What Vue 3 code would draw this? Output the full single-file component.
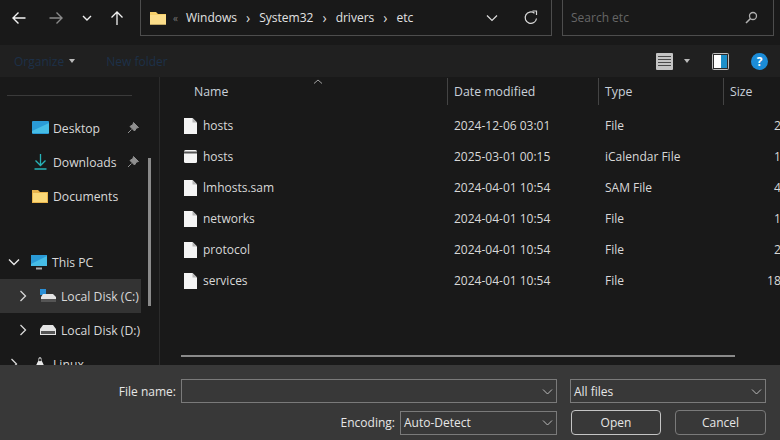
<script setup>
const quick = [
  { name: 'Desktop', icon: 'desktop', pin: true },
  { name: 'Downloads', icon: 'download', pin: true },
  { name: 'Documents', icon: 'folder', pin: false },
];

const files = [
  { name: 'hosts', date: '2024-12-06 03:01', type: 'File', size: '2 KB', icon: 'doc' },
  { name: 'hosts', date: '2025-03-01 00:15', type: 'iCalendar File', size: '1 KB', icon: 'cal' },
  { name: 'lmhosts.sam', date: '2024-04-01 10:54', type: 'SAM File', size: '4 KB', icon: 'doc' },
  { name: 'networks', date: '2024-04-01 10:54', type: 'File', size: '1 KB', icon: 'doc' },
  { name: 'protocol', date: '2024-04-01 10:54', type: 'File', size: '2 KB', icon: 'doc' },
  { name: 'services', date: '2024-04-01 10:54', type: 'File', size: '18 KB', icon: 'doc' },
];
</script>

<template>
  <div class="dialog">
    <!-- Top navigation -->
    <header class="nav">
      <div class="nav-buttons">
        <svg class="nav-arrow" width="16" height="16" viewBox="0 0 16 16"><path d="M14.5 8H2M7.5 2.5 2 8l5.5 5.5" fill="none" stroke="#f2f2f2" stroke-width="1.4"/></svg>
        <svg class="nav-arrow fwd" width="16" height="16" viewBox="0 0 16 16"><path d="M1.5 8H14M8.5 2.5 14 8l-5.500 5.500" fill="none" stroke="#8a8a8a" stroke-width="1.4"/></svg>
        <svg class="nav-chev" width="12" height="12" viewBox="0 0 12 12"><path d="M2 4l4 4 4-4" fill="none" stroke="#eee" stroke-width="1.4"/></svg>
        <svg class="nav-up" width="16" height="16" viewBox="0 0 16 16"><path d="M8 15V2M2.500 7.500 8 2l5.500 5.500" fill="none" stroke="#f2f2f2" stroke-width="1.300"/></svg>
      </div>
      <div class="address">
        <svg width="16" height="14" viewBox="0 0 16 14"><path d="M0 1h6l2 2h8v10.500H0z" fill="#f6cf6a"/><path d="M0 4h16v9.500H0z" fill="#fbdd8a"/></svg>
        <span class="crumb-more">«</span>
        <span class="crumb">Windows</span><span class="sep">›</span>
        <span class="crumb">System32</span><span class="sep">›</span>
        <span class="crumb">drivers</span><span class="sep">›</span>
        <span class="crumb">etc</span>
        <svg class="addr-chev" width="12" height="12" viewBox="0 0 12 12"><path d="M1 3.500 6 8.500l5-5" fill="none" stroke="#ddd" stroke-width="1.200"/></svg>
        <svg class="refresh" width="16" height="16" viewBox="0 0 16 16"><path d="M13.500 8.500A5.700 5.700 0 1 1 11.500 3.300" fill="none" stroke="#d8d8d8" stroke-width="1.200"/><path d="M9.500 1h4v4" fill="none" stroke="#d8d8d8" stroke-width="1.200"/></svg>
      </div>
      <div class="search">
        <span>Search etc</span>
        <svg width="13" height="13" viewBox="0 0 13 13"><circle cx="8" cy="5" r="3.500" fill="none" stroke="#b0b0b0" stroke-width="1.300"/><path d="M5.500 7.500 1 12" stroke="#b0b0b0" stroke-width="1.600"/></svg>
      </div>
    </header>

    <!-- Command bar -->
    <div class="commands">
      <span class="cmd">Organize</span>
      <span class="caret"></span>
      <span class="cmd new">New folder</span>
      <span class="spacer"></span>
      <svg width="17" height="17" viewBox="0 0 17 17"><rect width="17" height="17" rx="1" fill="#c4c4c4"/><path d="M2 3.500h13M2 6.500h13M2 9.500h13M2 12.500h13" stroke="#4a4a4a" stroke-width="1"/></svg>
      <span class="caret view"></span>
      <svg class="pane" width="17" height="17" viewBox="0 0 17 17"><rect x=".5" y=".5" width="16" height="16" rx="1" fill="#2a2a2a" stroke="#bdbdbd"/><rect x="2" y="2" width="7" height="13" fill="#fff"/><rect x="9" y="2" width="6" height="13" fill="#1c8fc9"/></svg>
      <span class="help">?</span>
    </div>

    <main class="body">
      <!-- Left tree -->
      <aside class="side">
        <div class="side-rule"></div>
        <div v-for="q in quick" :key="q.name" class="side-row">
          <svg v-if="q.icon === 'desktop'" width="17" height="14" viewBox="0 0 17 14"><rect width="17" height="13" rx="1" fill="#2a9ad6"/><path d="M0 10 17 2v10H0z" fill="#46bde6"/></svg>
          <svg v-else-if="q.icon === 'download'" width="17" height="16" viewBox="0 0 17 16"><path d="M8.500 0v11M3.500 6.500l5 5 5-5M2.500 15h12" fill="none" stroke="#27b3b8" stroke-width="1.300"/></svg>
          <svg v-else class="docs" width="16" height="13" viewBox="0 0 16 13"><path d="M0 0h6l2 2h8v11H0z" fill="#e9b44c"/><path d="M1 3h14v9H1z" fill="#fbd978"/></svg>
          <span class="side-label">{{ q.name }}</span>
          <svg v-if="q.pin" class="pin" width="12" height="12" viewBox="0 0 12 12"><path d="M6.500.5 11.500 5.500 9.500 6 7.500 9 3 4.500 6 2.500zM4.500 7.500 1 11" fill="#8f8f8f" stroke="#8f8f8f"/></svg>
        </div>
        <div class="side-gap"></div>
        <div class="side-row pc">
          <svg class="tw" width="12" height="12" viewBox="0 0 12 12"><path d="M1 3.500 6 8.500l5-5" fill="none" stroke="#e8e8e8" stroke-width="1.400"/></svg>
          <svg width="16" height="15" viewBox="0 0 16 15"><rect width="16" height="11" fill="#2a9ad6"/><path d="M0 9 16 1v10H0z" fill="#46bde6"/><path d="M5 13.500h6" stroke="#aaa" stroke-width="2"/></svg>
          <span class="side-label">This PC</span>
        </div>
        <div class="side-row disk selected">
          <svg class="tw" width="12" height="12" viewBox="0 0 12 12"><path d="M3.500 1l5 5-5 5" fill="none" stroke="#d8d8d8" stroke-width="1.300"/></svg>
          <svg width="16" height="14" viewBox="0 0 16 14"><rect width="6" height="6" fill="#2a8fd6"/><path d="M1 8 3 5h10l3 3v5H1z" fill="#e4e4e4"/><path d="M1 10h15v3H1z" fill="#555"/></svg>
          <span class="side-label">Local Disk (C:)</span>
        </div>
        <div class="side-row disk">
          <svg class="tw" width="12" height="12" viewBox="0 0 12 12"><path d="M3.500 1l5 5-5 5" fill="none" stroke="#d8d8d8" stroke-width="1.300"/></svg>
          <svg width="16" height="10" viewBox="0 0 16 10"><path d="M0 4 3 0h10l3 4v6H0z" fill="#e4e4e4"/><path d="M1 6h14v3H1z" fill="#555"/></svg>
          <span class="side-label">Local Disk (D:)</span>
        </div>
        <div class="side-row linux">
          <svg class="tw" width="12" height="12" viewBox="0 0 12 12"><path d="M3.500 1l5 5-5 5" fill="none" stroke="#d8d8d8" stroke-width="1.300"/></svg>
          <svg width="10" height="14" viewBox="0 0 12 16"><path d="M6 0C4 0 4 2 4 4 3 6 1 9 1 12c0 2 2 3 5 3s5-1 5-3c0-3-2-6-3-8 0-2 0-4-2-4z" fill="#e8e8e8"/><path d="M4.500 1.500h3v3h-3z" fill="#333"/></svg>
          <span class="side-label">Linux</span>
        </div>
        <div class="side-thumb"></div>
      </aside>

      <!-- File list -->
      <section class="list">
        <div class="row head">
          <span class="cell name-head">Name</span>
          <span class="cell">Date modified</span>
          <span class="cell">Type</span>
          <span class="cell">Size</span>
        </div>
        <svg class="sort" width="10" height="5" viewBox="0 0 10 5"><path d="M1 4.500 5 1l4 3.500" fill="none" stroke="#a0a0a0"/></svg>
        <div v-for="f in files" :key="f.name + f.date" class="row file">
          <span class="file-name">
            <svg v-if="f.icon === 'doc'" width="13" height="16" viewBox="0 0 13 16"><path d="M0 0h8.500L13 4.500V16H0z" fill="#f4f4f4"/><path d="M8.500 0v4.500H13z" fill="#b8b8b8"/></svg>
            <svg v-else width="13" height="13" viewBox="0 0 13 13"><rect width="13" height="13" rx="1.500" fill="#f4f4f4"/><rect y="1.500" width="13" height="2" fill="#555"/></svg>
            <span>{{ f.name }}</span>
          </span>
          <span class="cell">{{ f.date }}</span>
          <span class="cell">{{ f.type }}</span>
          <span class="size">{{ f.size }}</span>
        </div>
        <div class="hscroll"></div>
      </section>
    </main>

    <!-- Bottom form -->
    <footer class="form">
      <label class="lbl">File name:</label>
      <div class="box name-box">
        <svg width="11" height="11" viewBox="0 0 11 11"><path d="M1 3.500 5.500 8 10 3.500" fill="none" stroke="#bbb"/></svg>
      </div>
      <div class="box filter-box">
        <span>All files</span>
        <svg width="11" height="11" viewBox="0 0 11 11"><path d="M1 3.500 5.500 8 10 3.500" fill="none" stroke="#bbb"/></svg>
      </div>
      <label class="lbl enc-lbl">Encoding:</label>
      <div class="box enc-box">
        <span>Auto-Detect</span>
        <svg width="11" height="11" viewBox="0 0 11 11"><path d="M1 3.500 5.500 8 10 3.500" fill="none" stroke="#bbb"/></svg>
      </div>
      <button class="btn primary">Open</button>
      <button class="btn">Cancel</button>
    </footer>
  </div>
</template>

<style>
html, body {
  margin: 0;
  background: #191919;
  overflow: hidden;
}
</style>

<style scoped>
.dialog {
  width: 780px;
  height: 440px;
  overflow: hidden;
  display: flex;
  flex-direction: column;
  background: #191919;
  color: #d8d8d8;
  font-family: "Open Sans", "Noto Sans", sans-serif;
  font-size: 12px;
}

.nav {
  height: 45px;
  flex: none;
  display: flex;
  align-items: flex-start;
  background: #191919;
}
.nav-buttons {
  width: 140px;
  height: 35px;
  display: flex;
  align-items: center;
  padding-left: 11px;
  box-sizing: border-box;
}
.nav-arrow.fwd { margin-left: 21px; }
.nav-chev { margin-left: 17px; }
.nav-up { margin-left: 16px; }

.address {
  width: 412px;
  height: 36px;
  box-sizing: border-box;
  border: 1px solid #4d4d4d;
  border-top: none;
  display: flex;
  align-items: center;
  padding-left: 9px;
  color: #e2e2e2;
}
.crumb-more { margin: 0 8px 0 7px; color: #777; font-size: 10px; }
.sep { margin: 0 9px; color: #ddd; font-size: 14px; line-height: 12px; }
.addr-chev { margin-left: auto; margin-right: 25px; }
.refresh { margin-right: 12px; }

.search {
  margin-left: 10px;
  width: 212px;
  height: 36px;
  box-sizing: border-box;
  border: 1px solid #4d4d4d;
  border-top: none;
  display: flex;
  align-items: center;
  justify-content: space-between;
  padding: 0 15px 0 8px;
  color: #666;
}

.commands {
  height: 32px;
  flex: none;
  background: #202020;
  display: flex;
  align-items: center;
  padding-left: 14px;
  padding-right: 12px;
}
.cmd { color: #1d3048; }
.cmd.new { margin-left: 31px; }
.caret {
  width: 0;
  height: 0;
  margin-left: 5px;
  border-left: 3.500px solid transparent;
  border-right: 3.500px solid transparent;
  border-top: 4px solid #bbb;
}
.caret.view { margin-left: 11px; }
.spacer { flex: 1; }
.pane { margin-left: 22px; }
.help {
  width: 17px;
  height: 17px;
  margin-left: 22px;
  border-radius: 50%;
  background: #1b8cd8;
  color: #fff;
  font-size: 12px;
  font-weight: 700;
  line-height: 17px;
  text-align: center;
}

.body {
  flex: 1;
  min-height: 0;
  display: flex;
  overflow: hidden;
}

.side {
  position: relative;
  width: 160px;
  flex: none;
  box-sizing: border-box;
  border-right: 1px solid #2b2b2b;
  overflow: hidden;
  font-size: 12.2px;
}
.side-rule {
  margin: 18px 27px 0 7px;
  border-top: 1px solid #3a3a3a;
  height: 15px;
}
.side-row {
  height: 34px;
  width: 141px;
  box-sizing: border-box;
  display: flex;
  align-items: center;
  padding-left: 32px;
  white-space: nowrap;
}
.side-label { margin-left: 4px; }
.docs + .side-label { margin-left: 5px; }
.pin { margin-left: auto; margin-right: 2px; }
.side-gap { height: 32px; }
.side-row.pc { padding-left: 8px; }
.side-row.pc .side-label { margin-left: 5px; }
.side-row.pc .tw { margin-right: 11px; }
.side-row.disk { padding-left: 17px; }
.side-row.disk .tw { margin-right: 11px; }
.side-row.disk .side-label { margin-left: 5px; }
.side-row.linux { padding-left: 8px; }
.side-row.linux .tw { margin-right: 15px; }
.side-row.linux .side-label { margin-left: 8px; }
.selected { background: #333; }
.side-thumb {
  position: absolute;
  left: 148px;
  top: 81px;
  width: 3px;
  height: 148px;
  background: #8a8a8a;
}

.list {
  position: relative;
  flex: 1;
  min-width: 0;
  overflow: hidden;
  padding-left: 21px;
}
.row {
  display: grid;
  grid-template-columns: 266px 151px 125px 90px;
  align-items: center;
  white-space: nowrap;
}
.head {
  height: 28px;
  color: #c9d1d9;
  margin-bottom: 5px;
  font-size: 12.3px;
}
.head .cell {
  height: 27px;
  line-height: 27px;
  border-left: 1px solid #444;
  padding-left: 6px;
}
.head .name-head {
  border-left: none;
  padding-left: 13px;
}
.sort { position: absolute; left: 153px; top: 2px; }
.file {
  height: 31px;
}
.file .cell { padding-left: 7px; }
.file-name {
  display: flex;
  align-items: center;
  gap: 6px;
  padding-left: 3px;
  color: #d8d8d8;
}
.size {
  text-align: right;
  padding-right: 14px;
}
.hscroll {
  position: absolute;
  left: 21px;
  top: 278px;
  width: 554px;
  height: 2px;
  background: #8a8a8a;
}

.form {
  height: 75px;
  flex: none;
  box-sizing: border-box;
  background: #383838;
  display: grid;
  grid-template-columns: 176px 224px 157px 14px 90px 14px 91px;
  grid-template-rows: 24px 25px;
  row-gap: 7px;
  padding-top: 14px;
  align-items: center;
  color: #e6e6e6;
}
.lbl { text-align: right; }
.enc-lbl {
  grid-column: 1 / 3;
  padding-right: 5px;
}
.box {
  height: 24px;
  box-sizing: border-box;
  border: 1px solid #7a7a7a;
  display: flex;
  align-items: center;
  justify-content: space-between;
  padding: 0 3px;
}
.name-box {
  grid-column: 2 / 4;
  margin-left: 5px;
  justify-content: flex-end;
}
.filter-box { grid-column: 5 / 8; width: 196px; margin-left: -1px; }
.enc-box { grid-column: 3; }
.btn {
  grid-row: 2;
  height: 25px;
  box-sizing: border-box;
  background: #383838;
  border: 1px solid #7a7a7a;
  border-radius: 4px;
  color: #e6e6e6;
  font: inherit;
  padding: 0;
}
.btn.primary { grid-column: 5; border: 1.500px solid #c4c4c4; }
.btn:last-child { grid-column: 7; }
</style>
